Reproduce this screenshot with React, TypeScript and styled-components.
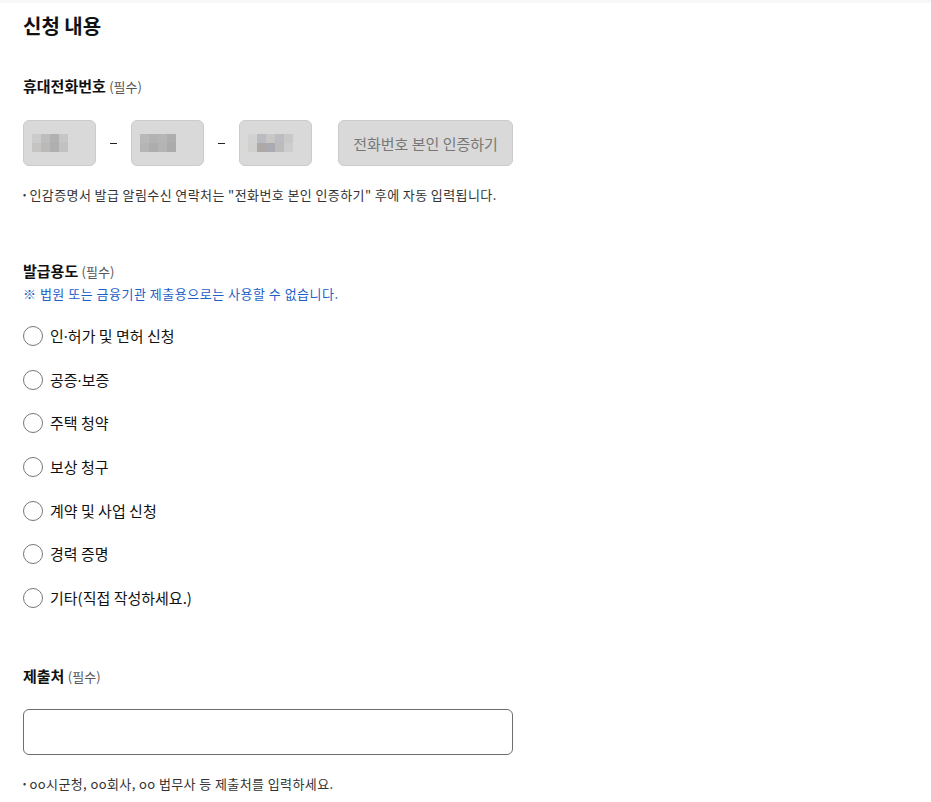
import React from "react";
import styled, { createGlobalStyle } from "styled-components";

const GlobalStyle = createGlobalStyle`
  body {
    margin: 0;
    background: #ffffff;
    font-family: "Noto Sans CJK KR", "Noto Sans", sans-serif;
    color: #111111;
  }
`;

// [before dot, after dot] – the middle dot is set in a latin face so it stays narrow
const purposes: [string, string?][] = [
  ["인", "허가 및 면허 신청"],
  ["공증", "보증"],
  ["주택 청약"],
  ["보상 청구"],
  ["계약 및 사업 신청"],
  ["경력 증명"],
  ["기타(직접 작성하세요.)"],
];

// blurred digits inside the phone fields
const mosaics: string[][][] = [
  [
    ["#cbcbcb", "#bdbdbd", "#b1b1b1", "#c6c6c6"],
    ["#c6c4c2", "#b9b9b9", "#afafaf", "#c1c1c3"],
  ],
  [
    ["#b9b9b9", "#b3b3b3", "#b6b6b6", "#aeaeae"],
    ["#b5b5b5", "#adadad", "#b4b4b4", "#ababab"],
  ],
  [
    ["#d2d2d2", "#b8bcc2", "#c9c7c5", "#bcbdc1", "#c8c8ca"],
    ["#d0d0ce", "#aea8a6", "#a9abb0", "#bcbcbc", "#cdcdcd"],
  ],
];

export default function App() {
  return (
    <Page>
      <GlobalStyle />
      <Title>신청 내용</Title>

      <Label $top={35}>
        휴대전화번호 <Required>(필수)</Required>
      </Label>
      <PhoneRow>
        {mosaics.map((rows, i) => (
          <React.Fragment key={i}>
            {i > 0 && <Dash />}
            <PhoneBox>
              <Mosaic $cols={rows[0].length}>
                {rows.flat().map((c, j) => (
                  <Cell key={j} style={{ background: c }} />
                ))}
              </Mosaic>
            </PhoneBox>
          </React.Fragment>
        ))}
        <VerifyButton>전화번호 본인 인증하기</VerifyButton>
      </PhoneRow>
      <Note $top={19}>
        <Dot>•</Dot>인감증명서 발급 알림수신 연락처는 "전화번호 본인 인증하기" 후에 자동
        입력됩니다.
      </Note>

      <Label $top={55}>
        발급용도 <Required>(필수)</Required>
      </Label>
      <Warning>※ 법원 또는 금융기관 제출용으로는 사용할 수 없습니다.</Warning>
      <RadioList>
        {purposes.map(([a, b]) => (
          <RadioRow key={a}>
            <RadioCircle />
            <RadioText>
              {a}
              {b && (
                <>
                  <MidDot>·</MidDot>
                  {b}
                </>
              )}
            </RadioText>
          </RadioRow>
        ))}
      </RadioList>

      <Label $top={45}>
        제출처 <Required>(필수)</Required>
      </Label>
      <TextInput type="text" />
      <Note $top={19}>
        <Dot>•</Dot>oo시군청, oo회사, oo 법무사 등 제출처를 입력하세요.
      </Note>
    </Page>
  );
}

const Page = styled.div`
  display: flex;
  flex-direction: column;
  align-items: flex-start;
  padding: 0 23px 20px;
  border-top: 3px solid #f7f7f7;
`;

const Title = styled.h2`
  margin: 9px 0 0;
  font-size: 20px;
  line-height: 28px;
  font-weight: 700;
  color: #111111;
`;

const Label = styled.div<{ $top: number }>`
  margin-top: ${(p) => p.$top}px;
  font-size: 15px;
  line-height: 22px;
  font-weight: 700;
  color: #111111;
`;

const Required = styled.span`
  font-size: 13px;
  font-weight: 400;
  color: #555555;
`;

const PhoneRow = styled.div`
  display: flex;
  align-items: center;
  margin-top: 22px;
  height: 46px;
`;

const PhoneBox = styled.div`
  box-sizing: border-box;
  width: 73px;
  height: 46px;
  border: 1px solid #cbcbcb;
  border-radius: 6px;
  background: #d9d9d9;
  display: flex;
  align-items: center;
  padding-left: 8px;
`;

const Mosaic = styled.div<{ $cols: number }>`
  display: grid;
  grid-template-columns: repeat(${(p) => p.$cols}, 9px);
  grid-auto-rows: 9px;
`;

const Cell = styled.div``;

const Dash = styled.div`
  width: 7px;
  height: 1px;
  background: #222222;
  margin: 0 14px;
`;

const VerifyButton = styled.button`
  box-sizing: border-box;
  margin-left: 26px;
  width: 175px;
  height: 46px;
  border: 1px solid #cbcbcb;
  border-radius: 6px;
  background: #d9d9d9;
  color: #777777;
  font-family: inherit;
  font-size: 15px;
  padding: 0;
`;

const Note = styled.div<{ $top: number }>`
  margin-top: ${(p) => p.$top}px;
  font-size: 13px;
  line-height: 20px;
  letter-spacing: 0.4px;
  color: #333333;
`;

const Dot = styled.span`
  font-size: 9px;
  margin-right: 3px;
  vertical-align: 2px;
`;

const Warning = styled.div`
  margin-top: 1px;
  font-size: 13px;
  line-height: 20px;
  letter-spacing: 0.5px;
  color: #1f5fc8;
`;

const RadioList = styled.div`
  display: flex;
  flex-direction: column;
  margin-top: 10px;
`;

const RadioRow = styled.label`
  display: flex;
  align-items: center;
  height: 43.7px;
  gap: 7px;
`;

const RadioCircle = styled.span`
  box-sizing: border-box;
  width: 20px;
  height: 20px;
  border-radius: 50%;
  border: 1.5px solid #777777;
  background: #ffffff;
`;

const RadioText = styled.span`
  font-size: 15px;
  line-height: 22px;
  color: #111111;
`;

const MidDot = styled.span`
  font-family: "Noto Sans", sans-serif;
`;

const TextInput = styled.input`
  box-sizing: border-box;
  margin-top: 21px;
  width: 490px;
  height: 46px;
  border: 1px solid #6e6e6e;
  border-radius: 6px;
  background: #ffffff;
  outline: none;
`;
